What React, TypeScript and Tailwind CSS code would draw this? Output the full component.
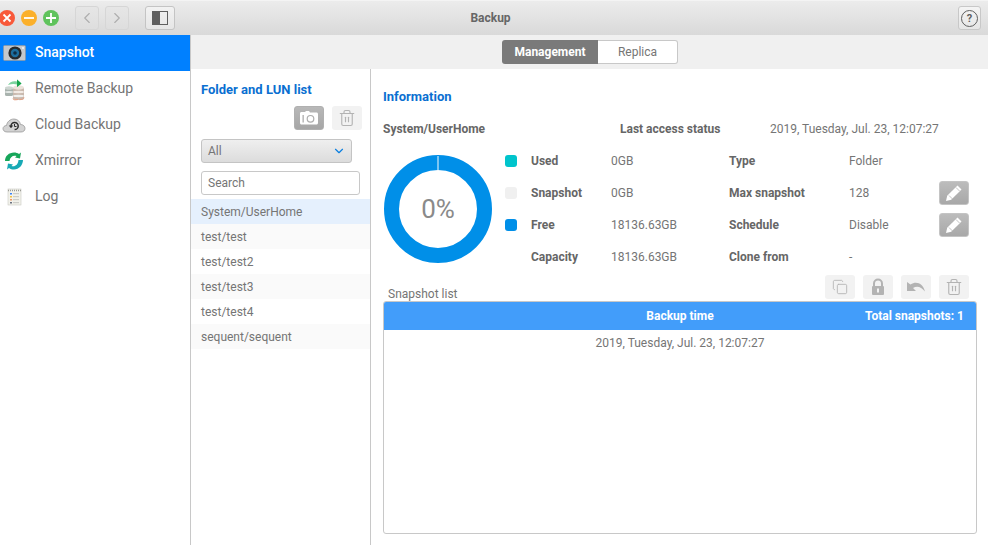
import { Copy, Trash2, ChevronDown, ChevronLeft, ChevronRight } from 'lucide-react'

function SnapshotIcon() {
  return (
    <svg width="24" height="20" viewBox="0 0 24 20">
      <rect x="1.500" y="2.500" width="22" height="15" rx="1" fill="#c4c8cc" stroke="#8e9499" strokeWidth="0.6" />
      <circle cx="13" cy="10" r="6.600" fill="#26292c" />
      <circle cx="13" cy="10" r="4.200" fill="#1c6d9e" />
      <circle cx="13" cy="10" r="1.800" fill="#0e2c44" />
      <circle cx="21" cy="5" r="1" fill="#f4f4f4" />
    </svg>
  )
}

function RemoteIcon() {
  return (
    <svg width="24" height="24" viewBox="0 0 24 24">
      <rect x="3" y="11" width="8" height="8" rx="1.500" fill="#a9b3ae" />
      <ellipse cx="7" cy="11" rx="4" ry="1.800" fill="#cdd6d1" />
      <ellipse cx="7" cy="15" rx="4" ry="1" fill="#e4e9e6" />
      <rect x="11" y="10" width="11" height="13" rx="2.500" fill="#c9b9ae" />
      <ellipse cx="16.500" cy="10.500" rx="5.500" ry="2.200" fill="#ece3db" />
      <ellipse cx="16.500" cy="15" rx="5.500" ry="1.200" fill="#f2ebe5" />
      <ellipse cx="16.500" cy="19" rx="5.500" ry="1.200" fill="#f0f0ee" />
      <path d="M16 22.500c-3 .6-5 .4-5-1" fill="none" stroke="#e9a184" strokeWidth="1" />
      <path d="M22 20.500c0 1.500-2 2-4.500 2.200" fill="none" stroke="#e9a184" strokeWidth="1" />
      <path d="M6 8c1.500-3 5-4.500 9-3.500V2.500l4.500 4-4.500 3.500V7.500C12 6.500 9 7 6 8z" fill="#7ed3a0" />
      <path d="M15 2.500l4.500 4-4.500 3.500z" fill="#16a34a" />
    </svg>
  )
}

function CloudIcon() {
  return (
    <svg width="24" height="20" viewBox="0 0 24 20">
      <path d="M5 17c-3 0-4-2-4-3.500S2.500 10.500 4.500 10.500C5 7 8 4 12 4c3.500 0 6 2.500 6.500 5.500 3 0 4.500 2 4.500 4s-1.500 3.500-4 3.500z" fill="#d3d3d3" stroke="#8f8f8f" strokeWidth="0.7" />
      <path d="M9 11a3.600 3.600 0 1 1 3.600 3.600" fill="none" stroke="#2d2d2d" strokeWidth="1.500" />
      <path d="M6.800 10.500h4.400L9 13.200z" fill="#2d2d2d" />
      <path d="M12.500 9v2.500h2" fill="none" stroke="#2d2d2d" strokeWidth="1" />
    </svg>
  )
}

function XmirrorIcon() {
  return (
    <svg width="24" height="24" viewBox="0 0 24 24">
      <path d="M3 12C3 7 7 3.500 12 3.500c2 0 3.500.5 5 1.500l2-1.500-1 6-5-1 1.500-1.500C11 6 8 8 7.500 12z" fill="#17a65a" />
      <path d="M21 11c0 5-4 9.500-9 9.500-2 0-3.500-.5-5-1.500l-2 1.500 1-6 5 1-1.500 1.500c3.500 1 6.500-1 7-6z" fill="#17a9b5" />
    </svg>
  )
}

function LogIcon() {
  return (
    <svg width="24" height="22" viewBox="0 0 24 22">
      <rect x="6" y="3" width="13" height="16" fill="#f2f2ec" stroke="#c9c9c2" strokeWidth="0.6" />
      <path d="M6 4.500h13" stroke="#9b9b95" strokeWidth="1.500" strokeDasharray="1 1" />
      <rect x="8" y="7" width="2" height="1.500" fill="#3b82f6" />
      <rect x="8" y="10" width="2" height="1.500" fill="#f5c242" />
      <rect x="8" y="13" width="2" height="1.500" fill="#ee9a6a" />
      <rect x="8" y="16" width="2" height="1.500" fill="#6b7280" />
      <path d="M11 7.700h6M11 10.700h6M11 13.700h6M11 16.700h6" stroke="#b9b9b4" strokeWidth="0.8" />
    </svg>
  )
}

function CameraGlyph() {
  return (
    <svg width="20" height="16" viewBox="0 0 20 16">
      <path d="M1 3.500C1 2.700 1.600 2 2.400 2H6l1-1h3l1 1.500h6.500c.8 0 1.500.7 1.500 1.500v9c0 .8-.7 1.500-1.500 1.500H2.500C1.700 14.500 1 13.800 1 13z" fill="#fff" />
      <rect x="3.500" y="5" width="1.300" height="7.500" fill="#adadad" />
      <circle cx="11.500" cy="8.800" r="3.300" fill="none" stroke="#adadad" strokeWidth="1.200" />
    </svg>
  )
}

function LockGlyph() {
  return (
    <svg width="14" height="18" viewBox="0 0 14 18">
      <path d="M3 8V5.500a4 4 0 0 1 8 0V8" fill="none" stroke="#b3b3b3" strokeWidth="2" />
      <rect x="1" y="8" width="12" height="9" rx="1" fill="#b3b3b3" />
      <rect x="6" y="10.500" width="2" height="4" fill="#f2f2f2" />
    </svg>
  )
}

function UndoGlyph() {
  return (
    <svg width="22" height="16" viewBox="0 0 22 16">
      <path d="M2 3v9h9L8 9c4-2.500 8-1.500 12 3.500C18 5 12 1.500 5.500 5.500z" fill="#b3b3b3" />
    </svg>
  )
}

function PencilGlyph() {
  return (
    <svg width="20" height="20" viewBox="0 0 20 20">
      <path d="M2 18l1.200-5.200L13.500 2.500 17.500 6.500 7.200 16.800z" fill="#fff" />
      <path d="M5 12.500l3.500 3.500" stroke="#b2b2b2" strokeWidth="0.8" />
      <path d="M12 4.500l3.500 3.500" stroke="#b2b2b2" strokeWidth="0.8" />
    </svg>
  )
}

function IconBtn({ children, active }: { children: React.ReactNode; active?: boolean }) {
  return (
    <button className={`w-[30px] h-6 rounded-[3px] flex items-center justify-center ${active ? 'bg-gradient-to-b from-[#b8b8b8] to-[#a6a6a6] border border-[#b0b0b0]' : 'bg-[#f2f2f2]'}`}>
      {children}
    </button>
  )
}

function TitleBtn({ children, strong }: { children: React.ReactNode; strong?: boolean }) {
  return (
    <button className={`h-6 rounded-[3px] flex items-center justify-center border bg-gradient-to-b ${strong ? 'border-[#c4c4c4] from-[#f2f2f2] to-[#e6e6e6]' : 'border-[#d6d6d6] from-[#e6e6e6] to-[#dedede]'} `}>
      {children}
    </button>
  )
}

const nav = [
  { label: 'Snapshot', icon: <SnapshotIcon />, active: true },
  { label: 'Remote Backup', icon: <RemoteIcon /> },
  { label: 'Cloud Backup', icon: <CloudIcon /> },
  { label: 'Xmirror', icon: <XmirrorIcon /> },
  { label: 'Log', icon: <LogIcon /> },
]

const folders = ['System/UserHome', 'test/test', 'test/test2', 'test/test3', 'test/test4', 'sequent/sequent']

function InfoRow({ dot, label, value, label2, value2, edit }: { dot?: string; label: string; value: string; label2: string; value2: string; edit?: boolean }) {
  return (
    <div className="h-8 flex items-center">
      <div className="w-[26px] shrink-0">
        {dot && <div className={`w-3 h-3 rounded-[3px] ${dot}`} />}
      </div>
      <div className="w-20 shrink-0 font-bold text-[#666]">{label}</div>
      <div className="w-[118px] shrink-0">{value}</div>
      <div className="w-[120px] shrink-0 font-bold text-[#666]">{label2}</div>
      <div className="w-[90px] shrink-0">{value2}</div>
      {edit && (
        <button className="w-[30px] h-6 rounded-[3px] flex items-center justify-center bg-gradient-to-b from-[#bcbcbc] to-[#a8a8a8] border border-[#c4c4c4]">
          <PencilGlyph />
        </button>
      )}
    </div>
  )
}

export default function App() {
  return (
    <div className="w-[988px] h-[545px] overflow-hidden flex flex-col bg-white text-[12px] text-[#757575] font-[family-name:Roboto,sans-serif]">
      {/* title bar */}
      <header className="h-[35px] shrink-0 flex items-center bg-gradient-to-b from-[#ececec] to-[#d9d9d9] border-t border-[#f4f4f4]">
        <div className="flex items-center gap-[6px] -ml-[1px] w-[76px]">
          <span className="w-4 h-4 rounded-full bg-[#f8593a] flex items-center justify-center">
            <svg width="10" height="10" viewBox="0 0 10 10"><path d="M1.500 1.500l7 7M8.500 1.500l-7 7" stroke="#fff" strokeWidth="1.800" /></svg>
          </span>
          <span className="w-4 h-4 rounded-full bg-[#fbb02b] flex items-center justify-center">
            <svg width="10" height="10" viewBox="0 0 10 10"><path d="M0 5h10" stroke="#fff" strokeWidth="1.800" /></svg>
          </span>
          <span className="w-4 h-4 rounded-full bg-[#5fc35c] flex items-center justify-center">
            <svg width="10" height="10" viewBox="0 0 10 10"><path d="M0 5h10M5 0v10" stroke="#fff" strokeWidth="1.800" /></svg>
          </span>
        </div>
        <div className="flex items-center gap-[6px]">
          <TitleBtn><span className="w-[22px] flex justify-center"><ChevronLeft size={18} strokeWidth={1.500} className="text-[#adadad]" /></span></TitleBtn>
          <TitleBtn><span className="w-[22px] flex justify-center"><ChevronRight size={18} strokeWidth={1.500} className="text-[#adadad]" /></span></TitleBtn>
        </div>
        <div className="ml-4">
          <TitleBtn strong>
            <span className="w-7 flex justify-center">
              <span className="w-4 h-[14px] border border-[#5f5f5f] flex">
                <span className="w-[7px] bg-[#5f5f5f]" />
              </span>
            </span>
          </TitleBtn>
        </div>
        <div className="flex-1 text-center font-bold text-[12px] text-[#666] pr-[152px]">Backup</div>
        <button className="mr-[7px] w-[23px] h-6 rounded-[3px] border border-[#c8c8c8] bg-gradient-to-b from-[#f4f4f4] to-[#e6e6e6] flex items-center justify-center">
          <span className="w-[17px] h-[17px] rounded-full border-[1.500px] border-[#5f5f5f] flex items-center justify-center text-[11px] font-bold text-[#5f5f5f] leading-none">?</span>
        </button>
      </header>

      <div className="flex-1 flex min-h-0">
        {/* sidebar */}
        <aside className="w-[191px] shrink-0 border-r border-[#c8c8c8]">
          {nav.map((n) => (
            <div key={n.label} className={`h-9 flex items-center gap-[9px] pl-[2px] text-[14px] ${n.active ? 'bg-[#0080ff] text-white font-medium' : 'text-[#757575]'}`}>
              <span className="w-6 flex justify-center">{n.icon}</span>
              <span className="-mt-[2px]">{n.label}</span>
            </div>
          ))}
        </aside>

        <div className="flex-1 flex flex-col min-w-0">
          {/* tabs */}
          <div className="h-[34px] shrink-0 bg-[#f0f0f0] flex justify-center items-start pt-[5px] pl-[1px]">
            <div className="w-[96px] h-6 bg-[#7a7a7a] rounded-l-[3px] text-white font-bold flex items-center justify-center">Management</div>
            <div className="w-[80px] h-6 bg-white border border-l-0 border-[#c8c8c8] rounded-r-[3px] flex items-center justify-center">Replica</div>
          </div>

          <div className="flex-1 flex min-h-0">
            {/* folder list */}
            <section className="w-[180px] shrink-0 border-r border-[#c8c8c8]">
              <h2 className="pl-[10px] pt-[11px] h-[37px] text-[13px] font-bold text-[#0a6fd1]">Folder and LUN list</h2>
              <div className="flex justify-end gap-2 pr-2">
                <IconBtn active><CameraGlyph /></IconBtn>
                <IconBtn><Trash2 size={18} strokeWidth={1.500} className="text-[#b3b3b3]" /></IconBtn>
              </div>
              <div className="mt-[9px] ml-[10px] w-[151px] h-6 rounded-[3px] border border-[#c4c4c4] bg-gradient-to-b from-[#efefef] to-[#dcdcdc] flex items-center justify-between pl-[6px] pr-[5px]">
                All
                <ChevronDown size={14} className="text-[#0a7fe0]" />
              </div>
              <div className="mt-2 ml-[10px] w-[159px] h-6 rounded-[3px] border border-[#c8c8c8] flex items-center pl-[6px]">Search</div>
              <ul className="mt-1">
                {folders.map((f, i) => (
                  <li key={f} className={`h-[25px] flex items-center pl-[10px] ${i === 0 ? 'bg-[#e5f0fd]' : i % 2 === 1 ? 'bg-[#fafafa]' : 'bg-white'}`}>{f}</li>
                ))}
              </ul>
            </section>

            {/* information */}
            <section className="flex-1 min-w-0 pl-3 pr-[11px]">
              <h2 className="pt-[18px] h-[50px] text-[13px] font-bold text-[#0a6fd1]">Information</h2>
              <div className="h-[20px] flex items-center">
                <span className="w-[237px] font-bold text-[#666]">System/UserHome</span>
                <span className="w-[150px] font-bold text-[#666]">Last access status</span>
                <span>2019, Tuesday, Jul. 23, 12:07:27</span>
              </div>
              <div className="flex mt-[16px]">
                <div className="relative w-[122px] h-[108px] shrink-0 pl-[1px]">
                  <svg width="108" height="108" viewBox="0 0 108 108">
                    <circle cx="54" cy="54" r="46.500" fill="none" stroke="#008fe8" strokeWidth="15" />
                    <path d="M54 1v14" stroke="#cfe9f8" strokeWidth="1.200" />
                  </svg>
                  <span className="absolute left-[1px] top-0 w-[108px] h-[108px] flex items-center justify-center text-[26px] text-[#8a8a8a]">0%</span>
                </div>
                <div className="-mt-[10px]">
                  <InfoRow dot="bg-[#00c4cc]" label="Used" value="0GB" label2="Type" value2="Folder" />
                  <InfoRow dot="bg-[#f0f0f0]" label="Snapshot" value="0GB" label2="Max snapshot" value2="128" edit />
                  <InfoRow dot="bg-[#008fe8]" label="Free" value="18136.63GB" label2="Schedule" value2="Disable" edit />
                  <InfoRow label="Capacity" value="18136.63GB" label2="Clone from" value2="-" />
                </div>
              </div>
              <div className="flex items-end justify-between h-[26px] mt-[2px] pl-[5px] pr-2">
                <span className="leading-none mb-[1px]">Snapshot list</span>
                <div className="flex gap-2 self-start">
                  <IconBtn><Copy size={16} strokeWidth={1.300} className="text-[#b3b3b3]" /></IconBtn>
                  <IconBtn><LockGlyph /></IconBtn>
                  <IconBtn><UndoGlyph /></IconBtn>
                  <IconBtn><Trash2 size={18} strokeWidth={1.500} className="text-[#b3b3b3]" /></IconBtn>
                </div>
              </div>
              <div className="h-[233px] border border-[#c8c8c8] rounded-[3px] overflow-hidden">
                <div className="h-[28px] bg-[#429dfa] text-white font-bold flex items-center relative">
                  <span className="w-full text-center">Backup time</span>
                  <span className="absolute right-3">Total snapshots: 1</span>
                </div>
                <div className="h-[26px] flex items-center justify-center">2019, Tuesday, Jul. 23, 12:07:27</div>
              </div>
            </section>
          </div>
        </div>
      </div>
    </div>
  )
}
